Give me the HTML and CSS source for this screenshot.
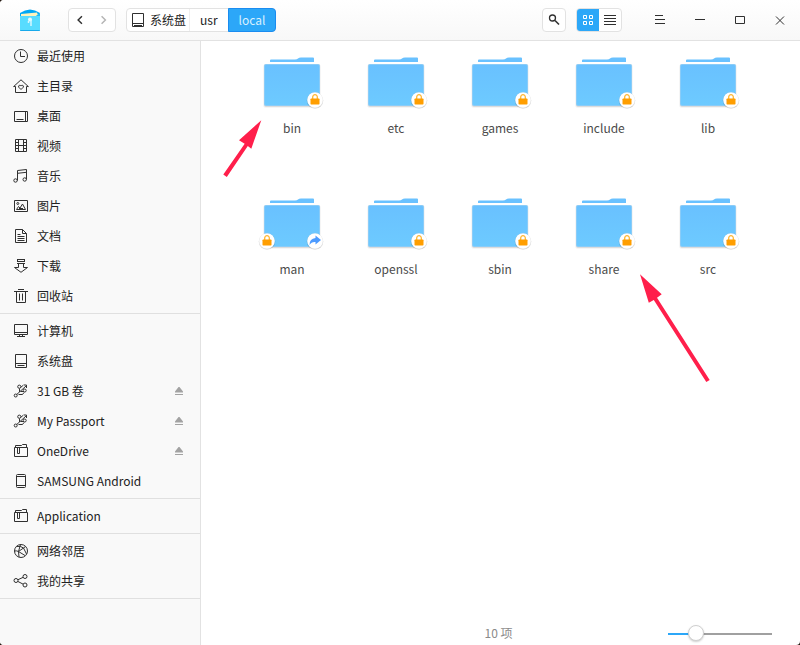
FILE: index.html
```html
<!DOCTYPE html>
<html lang="zh-CN">
<head>
<meta charset="utf-8">
<meta name="viewport" content="width=device-width, initial-scale=1">
<title>local</title>
<link rel="stylesheet" href="styles.css">
</head>
<body>
<svg class="defs" aria-hidden="true">
  <defs>
    <linearGradient id="folder-fill" x1="0" y1="0" x2="0" y2="1"><stop offset="0" stop-color="#69c1ff"/><stop offset="1" stop-color="#6dcaff"/></linearGradient>
    <symbol id="clock" viewBox="0 0 16 16"><circle cx="8" cy="8" r="6.5"/><path d="M7.500 3.500v5H12"/></symbol>
    <symbol id="home" viewBox="0 0 16 16"><path d="M.7 8.500 8 1.800l7.300 6.700M.5 8.500h2v6h11v-6h2M8 11.500 5.700 9.200c-.8-2 1.500-2.600 2.300-1.200.8-1.400 3.100-.8 2.300 1.200z"/></symbol>
    <symbol id="desktop" viewBox="0 0 16 16"><path d="M1.500 3.500h13v10h-13zM12.500 3.500v10M3.500 11.500h7"/></symbol>
    <symbol id="film" viewBox="0 0 16 16"><path d="M2.500 1.500h11v12h-11zM5.500 1.500v12M10.500 1.500v12M5.500 7.500h5M2.500 4.500h3M2.500 7.500h3M2.500 10.500h3M10.500 4.500h3M10.500 7.500h3M10.500 10.500h3"/></symbol>
    <symbol id="music" viewBox="0 0 16 16"><circle cx="2.500" cy="12.500" r="1.700"/><circle cx="11.700" cy="11.500" r="1.700"/><path d="M4.500 12.500v-10l9-1v10M4.500 5.300l9-1"/></symbol>
    <symbol id="picture" viewBox="0 0 16 16"><path d="M1.500 2.500h13v11h-13zM3.500 11.500l2-3 1.500 1.500 2.500-4 3 5.500zM6 10.500h4"/><circle cx="4.800" cy="5.500" r="1"/></symbol>
    <symbol id="document" viewBox="0 0 16 16"><path d="M2.500 1.500h7l4 4v9h-11zM9.500 1.500v4h4M4.500 8.500h7M4.500 10.500h7M4.500 12.500h7M4.500 6.500h3"/></symbol>
    <symbol id="download" viewBox="0 0 16 16"><path d="M4 1.500h8M4 3.500h8M4 5.500h8M5.500 5.500v4h-4L8 14.300l6.500-4.800h-4v-4M4.500 1.500v2M11.500 1.500v2"/></symbol>
    <symbol id="trash" viewBox="0 0 16 16"><path d="M5 1.500h6M1 3.500h14M3.500 3.500v11h9v-11M6.500 5.500v7M9.500 5.500v7"/></symbol>
    <symbol id="computer" viewBox="0 0 16 16"><path d="M1.500 1.500h13v10h-13zM1.500 9.500h13M6.500 11.500v2M9.500 11.500v2M4 13.500h8"/></symbol>
    <symbol id="disk" viewBox="0 0 16 16"><path d="M2.500 1.500h11v13h-11zM2.500 10.500h11M4.500 12.500h7"/></symbol>
    <symbol id="usb" viewBox="0 0 16 16"><path d="M3.500 11.700 13 3M10.500 2h3v3M6.500 9V5.500M7.500 8.500h3.500M7.500 4.500 10 2.500"/><circle cx="2.700" cy="12.500" r="1.500"/><circle cx="6.300" cy="3.700" r="1.600"/><circle cx="11.700" cy="7.500" r="1.500"/><path d="M5.500 11.500h4l1.500-2"/></symbol>
    <symbol id="folder-small" viewBox="0 0 16 16"><path d="M1.500 4.500h13v9h-13zM2.500 4.500v-2h6l1-1h4v3M4.500 4.500v6h2v-6"/></symbol>
    <symbol id="phone" viewBox="0 0 16 16"><path d="M3.500 2.500q0-1 1-1h7q1 0 1 1v11q0 1-1 1h-7q-1 0-1-1zM3.500 3.500h9M3.500 12.500h9"/></symbol>
    <symbol id="network" viewBox="0 0 16 16"><circle cx="8" cy="8" r="6.500"/><path d="M3.500 3.500q4-1 7 1.500l3 6M10.500 5 5.500 8.500l6.500 4M1.500 8q2-.5 4 .5L6 14M5.500 8.500 7.500 1.500M10.500 5l2-1.500"/></symbol>
    <symbol id="share" viewBox="0 0 16 16"><circle cx="3" cy="7.500" r="2"/><circle cx="12" cy="3.500" r="2"/><circle cx="12" cy="12" r="2"/><path d="m5 6.700 5-2.300M5 8.500l5 2.600"/></symbol>
    <symbol id="eject" viewBox="0 0 8 8"><path d="M3.500 0h1L8 4.500V5.500H0V4.500zM0 7h8v1H0z"/></symbol>
    <symbol id="folder" viewBox="0 0 64 56">
      <path d="M10 7V5.500q0-1 1-1h24q2 0 3-1Q39 2.500 41 2.500h12q1 0 1 1V7z" fill="#69c1ff"/>
      <rect x="3" y="9" width="58" height="44" rx="3" fill="#000" opacity=".04"/>
      <rect x="4" y="9" width="56" height="43" rx="2" fill="#000" opacity=".1"/>
      <rect x="4" y="9" width="56" height="42" rx="2" fill="#8accf8"/>
      <rect x="5" y="10" width="54" height="40" rx="1" fill="url(#folder-fill)"/>
    </symbol>
    <symbol id="lock" viewBox="0 0 18 18"><circle cx="9" cy="9.500" r="8.300" fill="#000" opacity=".14"/><circle cx="9" cy="9" r="7.800" fill="#fff"/><path d="M6.700 8V6a2.300 2.300 0 0 1 4.600 0v2" fill="none" stroke="#ffb733" stroke-width="1.300"/><rect x="4.500" y="7.500" width="9" height="6" rx=".7" fill="#ff9e00"/></symbol>
    <symbol id="link" viewBox="0 0 18 18"><circle cx="9" cy="9.500" r="8.300" fill="#000" opacity=".14"/><circle cx="9" cy="9" r="7.800" fill="#fff"/><path d="M9.500 3.500 15 8l-5.500 4.500V10Q5.500 9.500 3.500 13 3.500 6.500 9.500 6z" fill="#4d9bff"/></symbol>
  </defs>
</svg>
<div class="window">
  <header class="titlebar">
    <svg class="logo" viewBox="0 0 20 22" aria-hidden="true"><path d="M0 4Q10-3 20 4v4H0z" fill="#00a8f5"/><path d="M1 5 17 3.500l1.500 4H1z" fill="#fff4bd"/><path d="M0 7h16l4-3v17q0 1-1 1H1q-1 0-1-1z" fill="#58dcff"/><path d="M16 7l4-3v3z" fill="#1cbaf8"/><path d="M0 21h20q0 1-1 1H1q-1 0-1-1" fill="#18a9ea"/><circle cx="10" cy="10.500" r="2" fill="#e9fbff"/><path d="M8.500 12v2M11 11v6" stroke="#d6f7ff" stroke-width="1.500"/></svg>
    <nav class="group history" aria-label="历史">
      <button class="tool" aria-label="后退"><svg viewBox="0 0 24 22"><path d="m13.500 7-4 4 4 4" stroke-width="1.500"/></svg></button>
      <button class="tool faded" aria-label="前进" disabled><svg viewBox="0 0 24 22"><path d="m10 7 4 4-4 4" stroke-width="1.500"/></svg></button>
    </nav>
    <nav class="group crumbs" aria-label="路径">
      <a class="crumb root" href="#"><svg class="crumb-icon" viewBox="0 0 12 16" aria-hidden="true"><path d="M.5 1.500h11v13H.5zM.5 11.500h11M2 13.500h8"/></svg>系统盘</a>
      <a class="crumb" href="#">usr</a>
      <a class="crumb current" href="#" aria-current="page">local</a>
    </nav>
    <button class="group search" aria-label="搜索"><svg viewBox="0 0 22 22"><circle cx="9.500" cy="9" r="3" stroke-width="1.300"/><path d="m12 11.500 4 4" stroke-width="1.600"/></svg></button>
    <div class="group views">
      <button class="tool active" aria-label="图标视图"><svg viewBox="0 0 22 22"><path d="M6.500 6.500h3v3h-3zM12.500 6.500h3v3h-3zM6.500 12.500h3v3h-3zM12.500 12.500h3v3h-3z"/></svg></button>
      <button class="tool" aria-label="列表视图"><svg viewBox="0 0 22 22"><path d="M5 6.500h12M5 9.500h12M5 12.500h12M5 15.500h12"/></svg></button>
    </div>
    <div class="controls">
      <button class="control" aria-label="菜单"><svg viewBox="0 0 40 40"><path d="M15 15.500h8M15 19.500h10M15 23.500h10"/></svg></button>
      <button class="control" aria-label="最小化"><svg viewBox="0 0 40 40"><path d="M15 19.500h10"/></svg></button>
      <button class="control" aria-label="最大化"><svg viewBox="0 0 40 40"><path d="M15.500 16.500h9v7h-9z"/></svg></button>
      <button class="control" aria-label="关闭"><svg viewBox="0 0 40 40"><path d="m16 16.500 8 8M24 16.500l-8 8"/></svg></button>
    </div>
  </header>
  <div class="body">
    <aside class="sidebar">
      <ul class="places">
        <li><a href="#"><svg class="icon"><use href="#clock"/></svg>最近使用</a></li>
        <li><a href="#"><svg class="icon"><use href="#home"/></svg>主目录</a></li>
        <li><a href="#"><svg class="icon"><use href="#desktop"/></svg>桌面</a></li>
        <li><a href="#"><svg class="icon"><use href="#film"/></svg>视频</a></li>
        <li><a href="#"><svg class="icon"><use href="#music"/></svg>音乐</a></li>
        <li><a href="#"><svg class="icon"><use href="#picture"/></svg>图片</a></li>
        <li><a href="#"><svg class="icon"><use href="#document"/></svg>文档</a></li>
        <li><a href="#"><svg class="icon"><use href="#download"/></svg>下载</a></li>
        <li><a href="#"><svg class="icon"><use href="#trash"/></svg>回收站</a></li>
      </ul>
      <hr>
      <ul class="places">
        <li><a href="#"><svg class="icon"><use href="#computer"/></svg>计算机</a></li>
        <li><a href="#"><svg class="icon"><use href="#disk"/></svg>系统盘</a></li>
        <li><a href="#"><svg class="icon"><use href="#usb"/></svg>31 GB 卷</a><button class="eject" aria-label="弹出 31 GB 卷"><svg><use href="#eject"/></svg></button></li>
        <li><a href="#"><svg class="icon"><use href="#usb"/></svg>My Passport</a><button class="eject" aria-label="弹出 My Passport"><svg><use href="#eject"/></svg></button></li>
        <li><a href="#"><svg class="icon"><use href="#folder-small"/></svg>OneDrive</a><button class="eject" aria-label="弹出 OneDrive"><svg><use href="#eject"/></svg></button></li>
        <li><a href="#"><svg class="icon"><use href="#phone"/></svg>SAMSUNG Android</a></li>
      </ul>
      <hr>
      <ul class="places">
        <li><a href="#"><svg class="icon"><use href="#folder-small"/></svg>Application</a></li>
      </ul>
      <hr>
      <ul class="places">
        <li><a href="#"><svg class="icon"><use href="#network"/></svg>网络邻居</a></li>
        <li><a href="#"><svg class="icon"><use href="#share"/></svg>我的共享</a></li>
      </ul>
      <hr>
    </aside>
    <main class="content">
      <div class="files">
        <a class="file" href="#"><span class="thumb"><svg class="folder"><use href="#folder"/></svg><svg class="badge"><use href="#lock"/></svg></span>bin</a>
        <a class="file" href="#"><span class="thumb"><svg class="folder"><use href="#folder"/></svg><svg class="badge"><use href="#lock"/></svg></span>etc</a>
        <a class="file" href="#"><span class="thumb"><svg class="folder"><use href="#folder"/></svg><svg class="badge"><use href="#lock"/></svg></span>games</a>
        <a class="file" href="#"><span class="thumb"><svg class="folder"><use href="#folder"/></svg><svg class="badge"><use href="#lock"/></svg></span>include</a>
        <a class="file" href="#"><span class="thumb"><svg class="folder"><use href="#folder"/></svg><svg class="badge"><use href="#lock"/></svg></span>lib</a>
        <a class="file" href="#"><span class="thumb"><svg class="folder"><use href="#folder"/></svg><svg class="badge left"><use href="#lock"/></svg><svg class="badge"><use href="#link"/></svg></span>man</a>
        <a class="file" href="#"><span class="thumb"><svg class="folder"><use href="#folder"/></svg><svg class="badge"><use href="#lock"/></svg></span>openssl</a>
        <a class="file" href="#"><span class="thumb"><svg class="folder"><use href="#folder"/></svg><svg class="badge"><use href="#lock"/></svg></span>sbin</a>
        <a class="file" href="#"><span class="thumb"><svg class="folder"><use href="#folder"/></svg><svg class="badge"><use href="#lock"/></svg></span>share</a>
        <a class="file" href="#"><span class="thumb"><svg class="folder"><use href="#folder"/></svg><svg class="badge"><use href="#lock"/></svg></span>src</a>
      </div>
      <svg class="arrow arrow-bin" viewBox="0 0 40 58" aria-hidden="true"><path d="M39.300.3 17 20.300l5.700 3.400L1.300 54.500l3.500 2.500 21-31 3.500 2.700z"/></svg>
      <svg class="arrow arrow-share" viewBox="0 0 70 108" aria-hidden="true"><path d="m0 .3 21.700 20-4.700 3.400L69.700 106l-3.400 2-52.500-82-5 2.700z"/></svg>
      <footer class="status">
        <span class="count">10 项</span>
        <input class="zoom" type="range" min="0" max="100" value="23" aria-label="图标大小">
      </footer>
    </main>
  </div>
</div>
</body>
</html>
```
FILE: styles.css
```css
* { box-sizing: border-box; }

body {
  margin: 0;
  background: #241a12;
  color: #222;
  font: 12px/18px "Noto Sans CJK SC", "Noto Sans", sans-serif;
}

a { color: inherit; text-decoration: none; }

button {
  margin: 0;
  padding: 0;
  border: 0;
  background: none;
  color: inherit;
  font: inherit;
}

svg {
  display: block;
  fill: none;
  stroke: #303030;
}

.defs { position: absolute; width: 0; height: 0; }

.window {
  display: flex;
  flex-direction: column;
  min-height: 100vh;
  overflow: hidden;
  border-radius: 4px 0 4px 4px;
  background: #fff;
}

/* Title bar */
.titlebar {
  display: flex;
  align-items: center;
  height: 41px;
  padding-left: 20px;
  border-bottom: 1px solid #e2e2e2;
  background: linear-gradient(#fff, #f8f8f8);
}

.logo { width: 20px; height: 22px; margin-right: 28px; stroke: none; }

.group {
  display: flex;
  height: 24px;
  border: 1px solid #e2e2e2;
  border-radius: 4px;
  background: #fff;
}

.history { width: 48px; margin-right: 10px; }
.tool { flex: 1; }
.tool svg, .search svg { width: 100%; height: 22px; }
.faded svg { stroke: #b4b4b4; }

.crumb {
  display: flex;
  align-items: center;
  padding: 0 10px;
}

.root {
  gap: 6px;
  padding: 0 3px 0 5px;
  border-right: 1px solid #eee;
}

.crumb-icon { flex: none; width: 12px; height: 16px; }

.current {
  margin: -1px -1px -1px 0;
  border: 1px solid #1a8cf0;
  border-radius: 0 4px 4px 0;
  background: #2ca7f8;
  color: #d9f0ff;
}

.search { width: 24px; margin-left: auto; margin-right: 10px; }
.views { width: 46px; margin-right: 18px; overflow: hidden; }
.active { background: #2ca7f8; }
.active svg { stroke: #fff; }
.controls { display: flex; }
.control, .control svg { width: 40px; height: 40px; }

/* Sidebar */
.body { display: flex; flex: 1; }

.sidebar {
  flex: none;
  width: 201px;
  border-right: 1px solid #e2e2e2;
  background: #f9f9f9;
}

.places { margin: 0; padding: 0; list-style: none; }
.places li { display: flex; align-items: center; height: 30px; }

.places a {
  display: flex;
  flex: 1;
  align-items: center;
  gap: 8px;
  padding-left: 13px;
}

.icon { flex: none; width: 16px; height: 16px; }
.eject { margin-right: 17px; }
.eject svg { width: 8px; height: 8px; fill: #a3a3a3; stroke: none; }

hr { margin: 2px 0; border: 0; border-top: 1px solid #e0e0e0; }

/* Folder view */
.content {
  position: relative;
  display: flex;
  flex: 1;
  flex-direction: column;
}

.files {
  display: grid;
  grid-template-columns: repeat(auto-fill, 104px);
  grid-auto-rows: 141px;
  justify-content: center;
  padding: 14px 40px 0 39px;
}

.file {
  display: flex;
  flex-direction: column;
  align-items: center;
  gap: 8px;
  color: #4a4a4a;
}

.thumb { position: relative; }
.thumb svg { stroke: none; }
.folder { width: 64px; height: 56px; }
.badge { position: absolute; right: 0; bottom: 2px; width: 18px; height: 18px; }
.badge.left { right: auto; left: -2px; }

.arrow { position: absolute; fill: #ff1f4b; stroke: none; }
.arrow-bin { left: 21px; top: 79px; width: 40px; height: 58px; }
.arrow-share { left: 439px; top: 233px; width: 70px; height: 108px; }

/* Status bar */
.status {
  display: grid;
  grid-template-columns: 1fr auto 1fr;
  align-items: center;
  height: 24px;
  margin-top: auto;
  padding: 0 28px 0 24px;
  color: #8a8a8a;
}

.count { grid-column: 2; }

.zoom {
  justify-self: end;
  width: 104px;
  height: 18px;
  margin: 0;
  appearance: none;
  background: linear-gradient(90deg, #2ca7f8 27%, #a0a0a0 27%) 0 9px / 100% 2px no-repeat;
}

.zoom::-webkit-slider-thumb {
  appearance: none;
  width: 16px;
  height: 16px;
  border: 1px solid #d0d0d0;
  border-radius: 50%;
  background: #fff;
  box-shadow: 0 1px 2px rgba(0, 0, 0, .2);
}
```
